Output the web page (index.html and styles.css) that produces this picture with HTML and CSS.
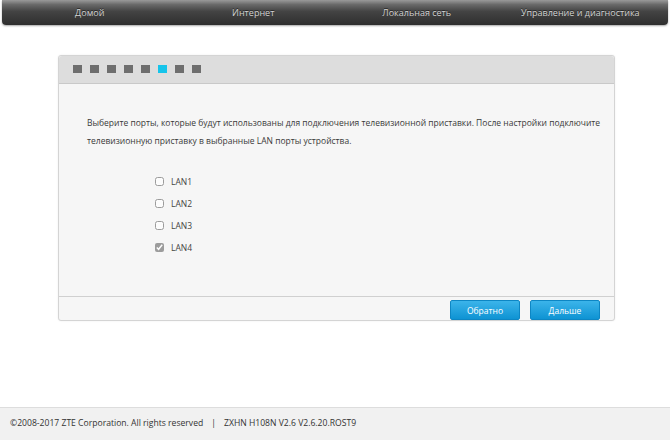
FILE: index.html
```html
<!DOCTYPE html>
<html lang="ru">

<head>
    <meta charset="UTF-8">
    <meta name="viewport" content="width=device-width, initial-scale=1.0">
    <title>ZXHN H108N</title>
    <link rel="stylesheet" href="styles.css">
</head>

<body>
    <div class="topMenu">
        <a href="#">Домой</a>
        <a href="#">Интернет</a>
        <a href="#">Локальная сеть</a>
        <a href="#">Управление и диагностика</a>
    </div>

    <div class="wizard">
        <div class="wizardSteps">
            <span class="step"></span>
            <span class="step"></span>
            <span class="step"></span>
            <span class="step"></span>
            <span class="step"></span>
            <span class="step current"></span>
            <span class="step"></span>
            <span class="step"></span>
        </div>

        <div class="wizardBody">
            <p class="hint">Выберите порты, которые будут использованы для подключения телевизионной приставки. После настройки подключите
                телевизионную приставку в выбранные LAN порты устройства.</p>

            <div class="portList">
                <label class="port"><input type="checkbox"><span>LAN1</span></label>
                <label class="port"><input type="checkbox"><span>LAN2</span></label>
                <label class="port"><input type="checkbox"><span>LAN3</span></label>
                <label class="port"><input type="checkbox" checked><span>LAN4</span></label>
            </div>
        </div>

        <div class="wizardButtons">
            <button>Обратно</button>
            <button>Дальше</button>
        </div>
    </div>

    <div class="footer">©2008-2017 ZTE Corporation. All rights reserved<span class="sep">|</span>ZXHN H108N V2.6 V2.6.20.ROST9</div>
</body>

</html>
```

FILE: styles.css
```css
* {
    box-sizing: border-box;
    margin: 0;
    padding: 0;
}

body {
    font-family: "Open Sans", "Liberation Sans", sans-serif;
    background-color: #ffffff;
    color: #333333;
    min-height: 100vh;
    display: flex;
    flex-direction: column;
}

/* top navigation */
.topMenu {
    margin: 0 2px;
    height: 25px;
    padding: 0 6px;
    display: grid;
    grid-template-columns: repeat(4, 1fr);
    align-items: center;
    background: linear-gradient(#9a9a9a 0%, #6a6a6a 18%, #444444 45%, #2e2e2e 100%);
    border-radius: 0 0 4px 4px;
    box-shadow: 0 1px 2px rgba(0, 0, 0, 0.35);
}

.topMenu a {
    color: #d2d2d2;
    text-decoration: none;
    text-align: center;
    font-size: 9px;
    text-shadow: 0 -1px 0 rgba(0, 0, 0, 0.5);
}

/* wizard card */
.wizard {
    width: 557px;
    margin: 30px 0 0 58px;
    background-color: #f6f6f6;
    border: 1px solid #d4d4d4;
    border-radius: 3px;
    box-shadow: 0 0 2px rgba(0, 0, 0, 0.08);
}

.wizardSteps {
    height: 28px;
    background-color: #dddddd;
    border-bottom: 1px solid #c9c9c9;
    border-radius: 3px 3px 0 0;
    display: flex;
    align-items: center;
    gap: 8px;
    padding: 0 0 2px 14px;
}

.step {
    width: 9px;
    height: 8px;
    background-color: #6e6e6e;
}

.step.current {
    background-color: #16c4ea;
}

.wizardBody {
    height: 212px;
    padding: 30px 6px 0 28px;
}

.hint {
    font-size: 8.5px;
    line-height: 18px;
    color: #3a3a3a;
}

.portList {
    margin: 20px 0 0 68px;
    display: flex;
    flex-direction: column;
}

.port {
    height: 22px;
    display: flex;
    align-items: center;
    gap: 7px;
    font-size: 8.5px;
    color: #444444;
}

.port input {
    width: 9px;
    height: 9px;
    margin: 0;
    accent-color: #777777;
    opacity: 0.7;
}

.wizardButtons {
    border-top: 1px solid #d0d0d0;
    height: 24px;
    padding: 3px 14px 0 0;
    display: flex;
    justify-content: flex-end;
    align-items: flex-start;
    gap: 10px;
}

.wizardButtons button {
    width: 70px;
    height: 20px;
    border: 1px solid #0d86c4;
    border-radius: 2px;
    background: linear-gradient(#3bb4ea, #0e93d3);
    color: #ffffff;
    font-family: "Open Sans", "Liberation Sans", sans-serif;
    font-size: 8.5px;
    cursor: pointer;
}

/* page footer */
.footer {
    margin-top: auto;
    height: 33px;
    padding: 0 10px;
    line-height: 31px;
    background-color: #f1f1f1;
    border-top: 1px solid #dddddd;
    font-size: 8.6px;
    color: #333333;
}

.footer .sep {
    margin: 0 8px;
}
```
